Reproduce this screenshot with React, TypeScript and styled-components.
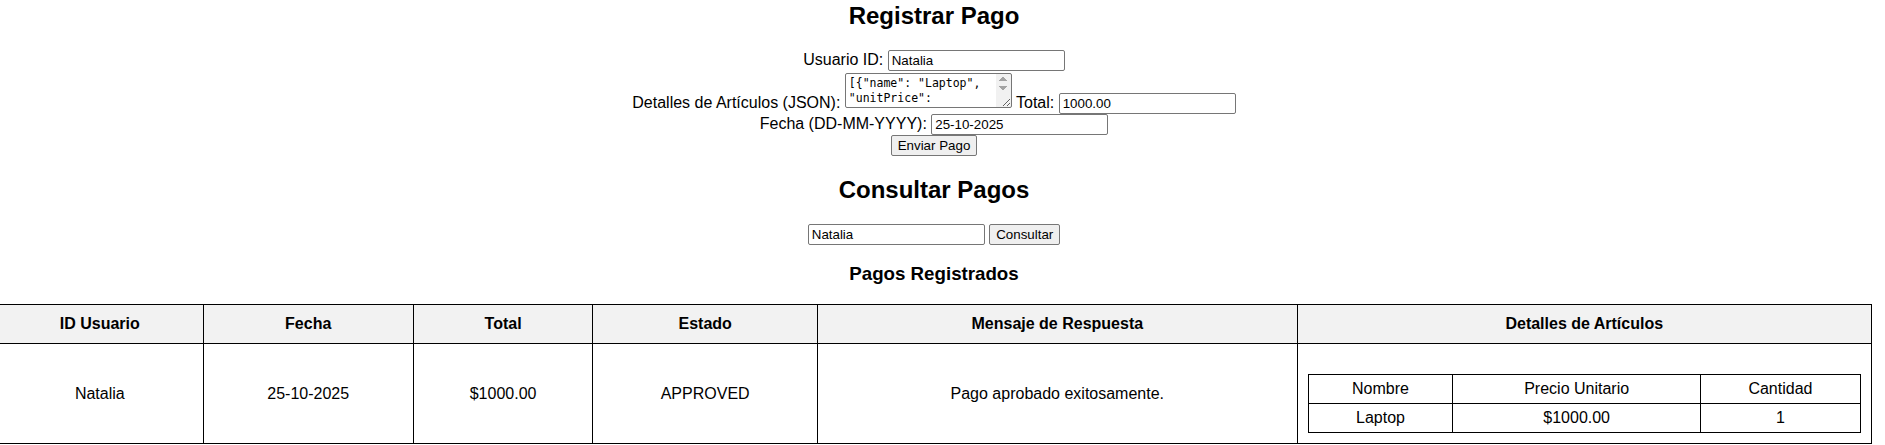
import styled, { createGlobalStyle } from 'styled-components';

const GlobalStyle = createGlobalStyle`
  body {
    margin: 0;
    background: #fff;
    color: #000;
    font-family: 'Liberation Sans', Arial, sans-serif;
    font-size: 16px;
  }
`;

type Item = { name: string; unitPrice: number; quantity: number };
type Payment = {
  userId: string;
  date: string;
  total: number;
  status: string;
  message: string;
  items: Item[];
};

const PAYMENTS: Payment[] = [
  {
    userId: 'Natalia',
    date: '25-10-2025',
    total: 1000,
    status: 'APPROVED',
    message: 'Pago aprobado exitosamente.',
    items: [{ name: 'Laptop', unitPrice: 1000, quantity: 1 }],
  },
];

const ITEMS_JSON = '[{"name": "Laptop", "unitPrice": 1000.00, "quantity": 1}]';

const Page = styled.div`
  margin: 0 13px 0 -4px;
  text-align: center;
`;

const Title = styled.h2<{ $first?: boolean }>`
  font-size: 24px;
  font-weight: bold;
  margin: ${(props) => (props.$first ? '2px' : '0.83em')} 0 0.83em;
`;

const SubTitle = styled.h3`
  font-size: 18.72px;
  font-weight: bold;
  margin: 1em 0;
`;

const Form = styled.form`
  margin: 0;
`;

const FieldRow = styled.div``;

const Label = styled.label`
  font-size: 16px;
`;

const TextInput = styled.input`
  box-sizing: border-box;
  width: 177px;
  height: 21px;
  padding: 1px 3px;
  border: 1px solid #767676;
  border-radius: 2px;
  font: 13.33px 'Liberation Sans', Arial, sans-serif;
  color: #000;
`;

// the scrollbar strip and its arrows are painted as backgrounds,
// the right padding keeps the JSON wrapping clear of them
const arrow = '#a3a3a3';
const JsonArea = styled.textarea`
  box-sizing: border-box;
  width: 167px;
  height: 35px;
  margin-top: 2px;
  padding: 2px 19px 2px 3px;
  border: 1px solid #767676;
  border-radius: 2px;
  font: 11.5px/15px 'DejaVu Sans Mono', monospace;
  color: #000;
  overflow: hidden;
  background-color: #fff;
  background-repeat: no-repeat;
  background-image:
    linear-gradient(to bottom right, transparent 50%, ${arrow} 50%),
    linear-gradient(to bottom left, transparent 50%, ${arrow} 50%),
    linear-gradient(to top right, transparent 50%, ${arrow} 50%),
    linear-gradient(to top left, transparent 50%, ${arrow} 50%),
    linear-gradient(#f1f1f1, #f1f1f1);
  background-size: 4px 5px, 4px 5px, 4px 5px, 4px 5px, 15px 100%;
  background-position:
    153px 2px,
    157px 2px,
    153px 12px,
    157px 12px,
    right top;
`;

const Button = styled.button`
  padding: 2px 6px;
  border: 1px solid #767676;
  border-radius: 2px;
  background: #efefef;
  font: 13.33px 'Liberation Sans', Arial, sans-serif;
  color: #000;
`;

const SearchRow = styled.div``;

const PaymentsTable = styled.table`
  width: 100%;
  border-collapse: collapse;
`;

const HeadCell = styled.th`
  border: 1px solid #000;
  padding: 10px;
  background: #f2f2f2;
  font-weight: bold;
`;

const Cell = styled.td`
  border: 1px solid #000;
  padding: 10px;
  text-align: center;
`;

const ItemsTable = styled.table`
  width: 100%;
  margin-top: 20px;
  border-collapse: collapse;
`;

const ItemHead = styled.th`
  border: 1px solid #000;
  padding: 5px;
  font-weight: normal;
`;

const ItemCell = styled.td`
  border: 1px solid #000;
  padding: 5px;
  text-align: center;
`;

const money = (n: number) => `$${n.toFixed(2)}`;

const ItemsDetail = ({ items }: { items: Item[] }) => (
  <ItemsTable>
    <thead>
      <tr>
        <ItemHead>Nombre</ItemHead>
        <ItemHead>Precio Unitario</ItemHead>
        <ItemHead>Cantidad</ItemHead>
      </tr>
    </thead>
    <tbody>
      {items.map((item) => (
        <tr key={item.name}>
          <ItemCell>{item.name}</ItemCell>
          <ItemCell>{money(item.unitPrice)}</ItemCell>
          <ItemCell>{item.quantity}</ItemCell>
        </tr>
      ))}
    </tbody>
  </ItemsTable>
);

export default function App() {
  return (
    <>
      <GlobalStyle />
      <Page>
        <Title $first>Registrar Pago</Title>
        <Form onSubmit={(e) => e.preventDefault()}>
          <FieldRow>
            <Label>Usuario ID:</Label> <TextInput defaultValue="Natalia" />
          </FieldRow>
          <FieldRow>
            <Label>Detalles de Artículos (JSON):</Label> <JsonArea defaultValue={ITEMS_JSON} />{' '}
            <Label>Total:</Label> <TextInput defaultValue="1000.00" />
          </FieldRow>
          <FieldRow>
            <Label>Fecha (DD-MM-YYYY):</Label> <TextInput defaultValue="25-10-2025" />
          </FieldRow>
          <Button type="submit">Enviar Pago</Button>
        </Form>

        <Title>Consultar Pagos</Title>
        <SearchRow>
          <TextInput defaultValue="Natalia" /> <Button>Consultar</Button>
        </SearchRow>

        <SubTitle>Pagos Registrados</SubTitle>
        <PaymentsTable>
          <thead>
            <tr>
              <HeadCell>ID Usuario</HeadCell>
              <HeadCell>Fecha</HeadCell>
              <HeadCell>Total</HeadCell>
              <HeadCell>Estado</HeadCell>
              <HeadCell>Mensaje de Respuesta</HeadCell>
              <HeadCell>Detalles de Artículos</HeadCell>
            </tr>
          </thead>
          <tbody>
            {PAYMENTS.map((p) => (
              <tr key={p.userId + p.date}>
                <Cell>{p.userId}</Cell>
                <Cell>{p.date}</Cell>
                <Cell>{money(p.total)}</Cell>
                <Cell>{p.status}</Cell>
                <Cell>{p.message}</Cell>
                <Cell>
                  <ItemsDetail items={p.items} />
                </Cell>
              </tr>
            ))}
          </tbody>
        </PaymentsTable>
      </Page>
    </>
  );
}
